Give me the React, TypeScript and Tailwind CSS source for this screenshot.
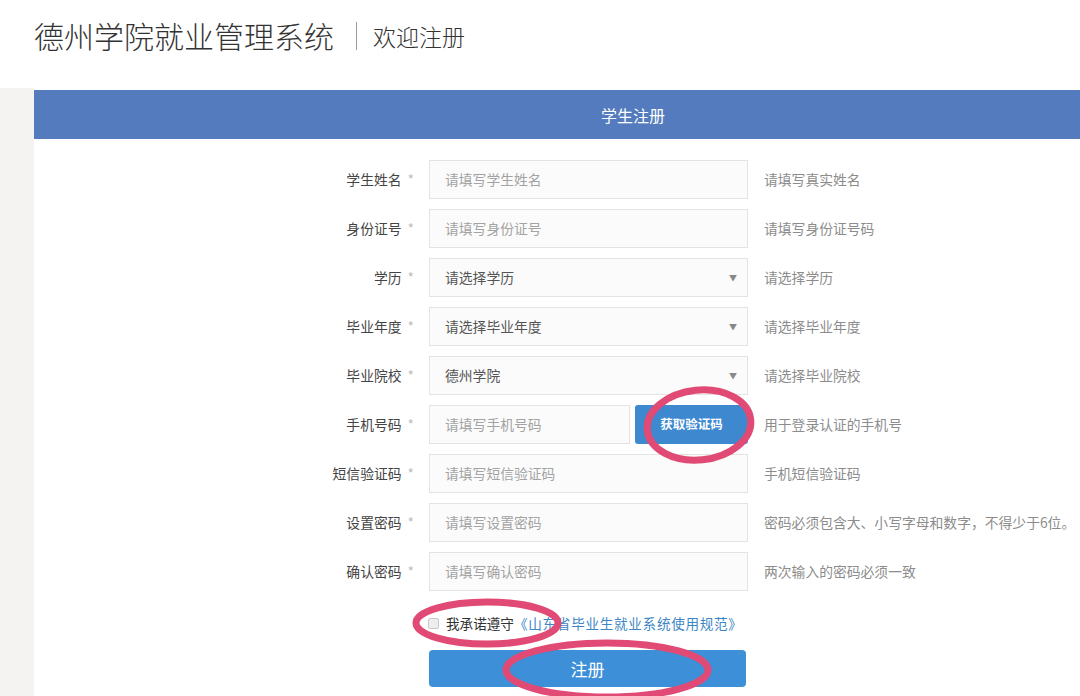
import React from "react";

const font = { fontFamily: '"Noto Sans CJK SC", "Noto Sans", sans-serif' };

type Row = {
  label: string;
  kind: "input" | "select" | "phone";
  text: string;
  hint: string;
};

const rows: Row[] = [
  { label: "学生姓名", kind: "input", text: "请填写学生姓名", hint: "请填写真实姓名" },
  { label: "身份证号", kind: "input", text: "请填写身份证号", hint: "请填写身份证号码" },
  { label: "学历", kind: "select", text: "请选择学历", hint: "请选择学历" },
  { label: "毕业年度", kind: "select", text: "请选择毕业年度", hint: "请选择毕业年度" },
  { label: "毕业院校", kind: "select", text: "德州学院", hint: "请选择毕业院校" },
  { label: "手机号码", kind: "phone", text: "请填写手机号码", hint: "用于登录认证的手机号" },
  { label: "短信验证码", kind: "input", text: "请填写短信验证码", hint: "手机短信验证码" },
  { label: "设置密码", kind: "input", text: "请填写设置密码", hint: "密码必须包含大、小写字母和数字，不得少于6位。" },
  { label: "确认密码", kind: "input", text: "请填写确认密码", hint: "两次输入的密码必须一致" },
];

function FormRow({ r }: { r: Row }) {
  return (
    <div className="flex items-center h-[39px]">
      <div className="w-[381px] text-right text-[13.8px] text-[#444] pr-[1px]">
        {r.label}
        <span className="ml-[6px] text-[#bdbdbd]">*</span>
      </div>
      {r.kind === "phone" ? (
        <div className="ml-[14px] flex h-[39px] w-[319px]">
          <div className="w-[201px] h-full border border-[#e3e3e3] bg-[#fbfbfb] flex items-center pl-[15px] text-[13.8px] text-[#a3a3a3]">
            {r.text}
          </div>
          <div className="ml-[5px] w-[113px] h-full rounded-[3px] bg-[#3d88cf] flex items-center justify-center text-[12.5px] font-semibold text-white">
            获取验证码
          </div>
        </div>
      ) : (
        <div className="ml-[14px] w-[319px] h-[39px] border border-[#e3e3e3] bg-[#fbfbfb] flex items-center pl-[15px] pr-[10px] text-[13.8px]">
          <span className={r.kind === "select" ? "flex-1 text-[#555]" : "flex-1 text-[#a3a3a3]"}>{r.text}</span>
          {r.kind === "select" && <span className="text-[8px] text-[#888]">▼</span>}
        </div>
      )}
      <div className="ml-[16px] text-[13.8px] text-[#8c8c8c] whitespace-nowrap">{r.hint}</div>
    </div>
  );
}

export default function App() {
  return (
    <div className="relative w-[1080px] h-[696px] overflow-hidden bg-white" style={font}>
      <header className="h-[88px] flex items-start pl-[34px] pt-[15px]">
        <div className="text-[30px] leading-[40px] text-[#333] font-light">德州学院就业管理系统</div>
        <div className="ml-[22px] mt-[7px] w-[1px] h-[28px] bg-[#9a9a9a]"></div>
        <div className="ml-[16px] mt-[3px] text-[23px] leading-[36px] text-[#333] font-light">欢迎注册</div>
      </header>
      <div className="flex h-[608px]">
        <div className="w-[34px] bg-[#f4f3f2]"></div>
        <div className="flex-1 pt-[2px]">
          <div className="h-[49px] bg-[#537bbd] flex items-center justify-center pl-[152px] text-[16px] text-white">
            学生注册
          </div>
          <div className="pt-[21px] flex flex-col gap-[10px]">
            {rows.map((r) => (
              <FormRow key={r.label} r={r} />
            ))}
          </div>
          <div className="mt-[23px] flex items-center h-[18px] pl-[394px] text-[13.6px]">
            <span className="w-[11px] h-[11px] border border-[#c8c8c8] bg-[#eee] rounded-[2px]"></span>
            <span className="ml-[7px] text-[#333]">我承诺遵守</span>
            <span className="text-[#3d86c6] tracking-[0.7px]">《山东省毕业生就业系统使用规范》</span>
          </div>
          <div className="mt-[18px] ml-[395px] w-[317px] h-[37px] rounded-[4px] bg-[#3d8fd8] flex items-center justify-center text-[17px] text-white">
            注册
          </div>
        </div>
      </div>
      <svg className="absolute inset-0 pointer-events-none" width="1080" height="696">
        <ellipse cx="699" cy="425" rx="52" ry="35" fill="none" stroke="#e04a74" strokeWidth="7" transform="rotate(-6 699 425)" />
        <ellipse cx="487" cy="623" rx="71" ry="21" fill="none" stroke="#e04a74" strokeWidth="7" />
        <ellipse cx="607" cy="670" rx="101" ry="27" fill="none" stroke="#e04a74" strokeWidth="7" />
      </svg>
    </div>
  );
}
